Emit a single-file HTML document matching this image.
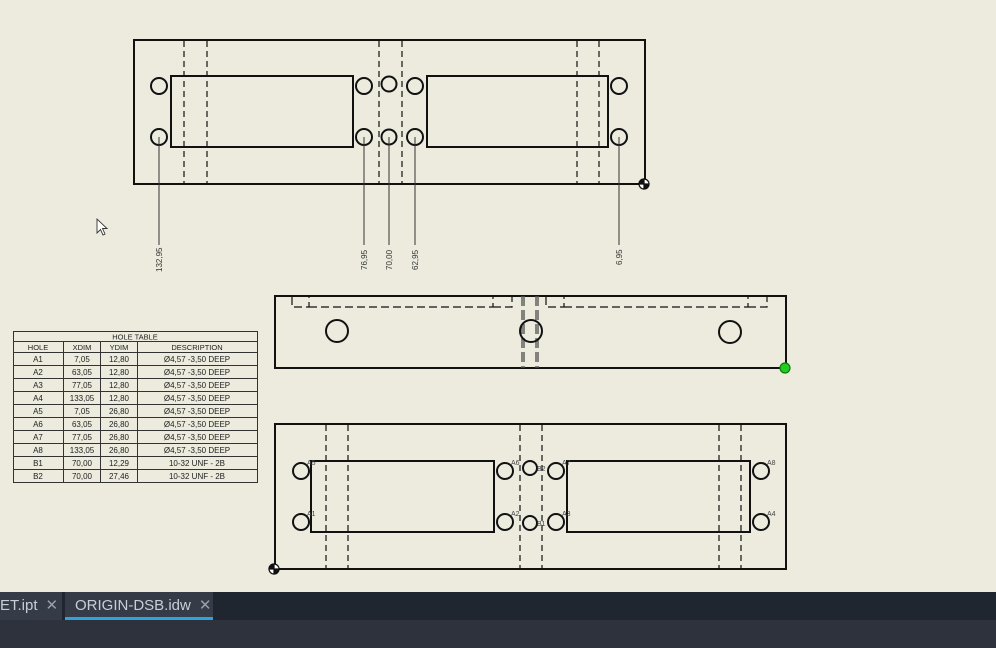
<!DOCTYPE html>
<html><head><meta charset="utf-8"><style>
html,body{margin:0;padding:0;width:996px;height:648px;overflow:hidden;background:#ecebde;font-family:"Liberation Sans",sans-serif}
svg{position:absolute;left:0;top:0}
.tabs{position:absolute;left:0;top:592px;width:996px;height:28px;background:#1f2630}
.below{position:absolute;left:0;top:620px;width:996px;height:28px;background:#2d323c}
.tab{position:absolute;top:0;height:28px;background:#353c48;color:#c9ced6;font-size:15px;line-height:27px}
.tab .x{color:#9aa0a8;margin-left:8px;font-size:15px}
</style></head><body>
<svg width="996" height="592" viewBox="0 0 996 592" xmlns="http://www.w3.org/2000/svg">
<g fill="none" stroke="#111" stroke-width="2">
<!-- top view -->
<rect x="134" y="40" width="511" height="144"/>
<rect x="171" y="76" width="182" height="71"/>
<rect x="427" y="76" width="181" height="71"/>
<g stroke-width="1.2" stroke-dasharray="6,4">
<line x1="184" y1="41" x2="184" y2="184"/><line x1="207" y1="41" x2="207" y2="184"/>
<line x1="379" y1="41" x2="379" y2="184"/><line x1="402" y1="41" x2="402" y2="184"/>
<line x1="577" y1="41" x2="577" y2="184"/><line x1="599" y1="41" x2="599" y2="184"/>
</g>
<circle cx="159" cy="86" r="8"/><circle cx="159" cy="137" r="8"/>
<circle cx="364" cy="86" r="8"/><circle cx="364" cy="137" r="8"/>
<circle cx="389" cy="84" r="7.5"/><circle cx="389" cy="137" r="7.5"/>
<circle cx="415" cy="86" r="8"/><circle cx="415" cy="137" r="8"/>
<circle cx="619" cy="86" r="8"/><circle cx="619" cy="137" r="8"/>
<g stroke="#333" stroke-width="1">
<line x1="159" y1="137" x2="159" y2="245"/><line x1="364" y1="137" x2="364" y2="245"/>
<line x1="389" y1="137" x2="389" y2="245"/><line x1="415" y1="137" x2="415" y2="245"/>
<line x1="619" y1="137" x2="619" y2="245"/>
</g>
<!-- middle view -->
<rect x="275" y="296" width="511" height="72"/>
<g stroke-width="1.2" stroke-dasharray="8,4">
<path d="M292 297V307H309V297M309 307H493V297M493 307H512V297"/>
<path d="M546 297V307H564V297M564 307H748V297M748 307H767V297"/>
</g>
<g stroke="#555" stroke-width="1.4" stroke-dasharray="10,4">
<line x1="522" y1="296" x2="522" y2="368"/><line x1="524" y1="296" x2="524" y2="368"/>
<line x1="536" y1="296" x2="536" y2="368"/><line x1="538" y1="296" x2="538" y2="368"/>
</g>
<circle cx="337" cy="331" r="11"/><circle cx="531" cy="331" r="11"/><circle cx="730" cy="332" r="11"/>
<!-- bottom view -->
<rect x="275" y="424" width="511" height="145"/>
<rect x="311" y="461" width="183" height="71"/>
<rect x="567" y="461" width="183" height="71"/>
<g stroke-width="1.2" stroke-dasharray="6,4">
<line x1="326" y1="425" x2="326" y2="569"/><line x1="348" y1="425" x2="348" y2="569"/>
<line x1="520" y1="425" x2="520" y2="569"/><line x1="542" y1="425" x2="542" y2="569"/>
<line x1="719" y1="425" x2="719" y2="569"/><line x1="741" y1="425" x2="741" y2="569"/>
</g>
<circle cx="301" cy="471" r="8"/><circle cx="301" cy="522" r="8"/>
<circle cx="505" cy="471" r="8"/><circle cx="505" cy="522" r="8"/>
<circle cx="530" cy="468" r="7"/><circle cx="530" cy="523" r="7"/>
<circle cx="556" cy="471" r="8"/><circle cx="556" cy="522" r="8"/>
<circle cx="761" cy="471" r="8"/><circle cx="761" cy="522" r="8"/>
</g>
<!-- origin markers -->
<g stroke="#111" stroke-width="1.2">
<circle cx="644" cy="184" r="5" fill="#fff"/><path d="M644 184V179A5 5 0 0 0 639 184Z M644 184V189A5 5 0 0 0 649 184Z" fill="#111"/>
<circle cx="274" cy="569" r="5" fill="#fff"/><path d="M274 569V564A5 5 0 0 0 269 569Z M274 569V574A5 5 0 0 0 279 569Z" fill="#111"/>
</g>
<circle cx="785" cy="368" r="5" fill="#22cc22" stroke="#0a7a0a" stroke-width="1.2"/>
<!-- dim texts -->
<g font-family="Liberation Sans, sans-serif" font-size="8" fill="#333">
<text transform="translate(162,272) rotate(-90)">132,95</text>
<text transform="translate(367,270) rotate(-90)">76,95</text>
<text transform="translate(392,270) rotate(-90)">70,00</text>
<text transform="translate(418,270) rotate(-90)">62,95</text>
<text transform="translate(622,265) rotate(-90)">6,95</text>
</g>
<g font-family="Liberation Sans, sans-serif" font-size="7" fill="#444">
<text x="307" y="465">A5</text><text x="307" y="516">A1</text>
<text x="511" y="465">A6</text><text x="511" y="516">A2</text>
<text x="537" y="471">B2</text><text x="537" y="526">B1</text>
<text x="562" y="465">A7</text><text x="562" y="516">A3</text>
<text x="767" y="465">A8</text><text x="767" y="516">A4</text>
</g>
<!-- cursor -->
<path d="M97 219V233L100.5 229.5L103 235L105 234L102.5 228.5H107Z" fill="#fff" stroke="#333" stroke-width="0.9"/>
<!-- hole table -->
<g stroke="#333" stroke-width="1" fill="none">
<rect x="13.5" y="331.5" width="244" height="151"/>
<line x1="13" y1="341.5" x2="257" y2="341.5"/>
<line x1="13" y1="352.5" x2="257" y2="352.5"/>
<line x1="63.5" y1="341" x2="63.5" y2="483"/><line x1="100.5" y1="341" x2="100.5" y2="483"/><line x1="137.5" y1="341" x2="137.5" y2="483"/>
<path d="M13 365.5H257M13 378.5H257M13 391.5H257M13 404.5H257M13 417.5H257M13 430.5H257M13 443.5H257M13 456.5H257M13 469.5H257"/>
</g>
<g font-family="Liberation Sans, sans-serif" font-size="7.5" fill="#222" text-anchor="middle">
<text x="135" y="339.5">HOLE TABLE</text>
<text x="38" y="350">HOLE</text><text x="82" y="350">XDIM</text><text x="119" y="350">YDIM</text><text x="197" y="350">DESCRIPTION</text>
</g>
<g font-family="Liberation Sans, sans-serif" font-size="8" fill="#222" text-anchor="middle">
<g transform="translate(0,362)"><text x="38">A1</text><text x="82">7,05</text><text x="119">12,80</text><text x="197">Ø4,57 -3,50 DEEP</text></g>
<g transform="translate(0,375)"><text x="38">A2</text><text x="82">63,05</text><text x="119">12,80</text><text x="197">Ø4,57 -3,50 DEEP</text></g>
<g transform="translate(0,388)"><text x="38">A3</text><text x="82">77,05</text><text x="119">12,80</text><text x="197">Ø4,57 -3,50 DEEP</text></g>
<g transform="translate(0,401)"><text x="38">A4</text><text x="82">133,05</text><text x="119">12,80</text><text x="197">Ø4,57 -3,50 DEEP</text></g>
<g transform="translate(0,414)"><text x="38">A5</text><text x="82">7,05</text><text x="119">26,80</text><text x="197">Ø4,57 -3,50 DEEP</text></g>
<g transform="translate(0,427)"><text x="38">A6</text><text x="82">63,05</text><text x="119">26,80</text><text x="197">Ø4,57 -3,50 DEEP</text></g>
<g transform="translate(0,440)"><text x="38">A7</text><text x="82">77,05</text><text x="119">26,80</text><text x="197">Ø4,57 -3,50 DEEP</text></g>
<g transform="translate(0,453)"><text x="38">A8</text><text x="82">133,05</text><text x="119">26,80</text><text x="197">Ø4,57 -3,50 DEEP</text></g>
<g transform="translate(0,466)"><text x="38">B1</text><text x="82">70,00</text><text x="119">12,29</text><text x="197">10-32 UNF - 2B</text></g>
<g transform="translate(0,479)"><text x="38">B2</text><text x="82">70,00</text><text x="119">27,46</text><text x="197">10-32 UNF - 2B</text></g>
</g>
</svg>
<div class="tabs">
<div class="tab" style="left:0;width:62px;padding-left:0">ET.ipt<span class="x">✕</span></div>
<div class="tab" style="left:65px;width:148px;box-sizing:border-box;padding-left:10px;border-bottom:3px solid #2fa3dc">ORIGIN-DSB.idw<span class="x">✕</span></div>
</div>
<div class="below"></div>
</body></html>
